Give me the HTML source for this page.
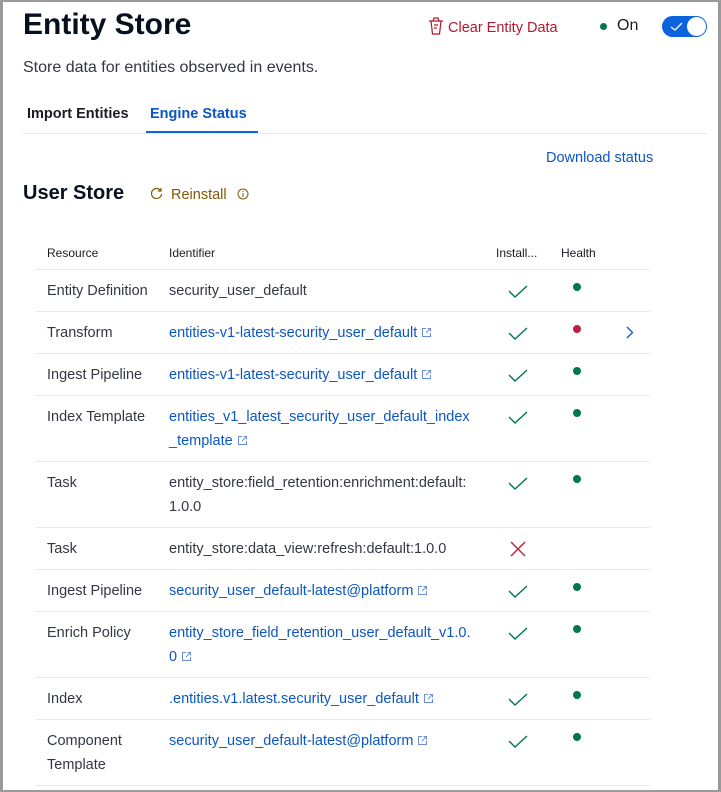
<!DOCTYPE html>
<html><head><meta charset="utf-8"><style>
*{box-sizing:border-box;margin:0;padding:0}
body{width:721px;height:792px;background:#fff;font-family:"Liberation Sans",sans-serif;color:#1a1c21;position:relative;overflow:hidden}
.frame{position:absolute;left:0;top:0;width:721px;height:792px;border:2px solid #9a9a9a;border-left-width:3px;border-right-width:3px}
.abs{position:absolute;white-space:nowrap}
h1{position:absolute;left:23px;top:8px;font-size:30px;font-weight:bold;color:#07101f}
.link{color:#0b56c5}
table{position:absolute;left:36px;top:236px;width:614px;border-collapse:collapse;font-size:14.5px;table-layout:fixed}
td,th{text-align:left;vertical-align:top;border-bottom:1px solid #e3e8f2;padding:9px 11px 8px;line-height:24px;color:#343741;white-space:nowrap;overflow:visible}
th{font-size:12px;font-weight:normal;color:#1a1c21;padding:7px 11px 6px;line-height:20px}
.ext{display:inline-block;width:11px;height:11px;margin-left:4px;vertical-align:-1px}
.dot{display:block;width:8px;height:8px;border-radius:50%;background:#00784f;margin:4px 0 0 12px}
.ck{display:block;margin:6px 0 0 12px}
</style></head><body>
<h1>Entity Store</h1>
<div class="abs" style="left:428px;top:17px;font-size:14.5px;color:#b4182d">
<svg width="16" height="18" viewBox="0 0 16 18" style="vertical-align:-3px;margin-right:4px" fill="none" stroke="#b4182d" stroke-width="1.2"><path d="M1 4h14M5 4l1-3h4l1 3M3 4l1.5 13h7L13 4M6 8h4M6 11h3"/></svg>Clear Entity Data</div>
<div class="abs" style="left:600px;top:23px;width:7px;height:7px;border-radius:50%;background:#00784f"></div>
<div class="abs" style="left:617px;top:17px;font-size:16px;color:#1a1c21">On</div>
<div class="abs" style="left:662px;top:16px;width:45px;height:21px;border-radius:11px;background:#0b64dd">
<svg width="14" height="10" viewBox="0 0 14 10" style="position:absolute;left:8px;top:6px" fill="none" stroke="#fff" stroke-width="1.3"><path d="M1 5l4 3 7-7"/></svg>
<div style="position:absolute;right:1px;top:1px;width:19px;height:19px;border-radius:50%;background:#fff"></div></div>
<div class="abs" style="left:23px;top:59px;font-size:16px;color:#343741">Store data for entities observed in events.</div>
<div class="abs" style="left:27px;top:106px;font-size:14.5px;font-weight:bold;color:#1a1c21">Import Entities</div>
<div class="abs" style="left:150px;top:106px;font-size:14.5px;font-weight:bold;color:#0b56c5">Engine Status</div>
<div class="abs" style="left:23px;top:133px;width:684px;height:1px;background:#e3e8f2"></div>
<div class="abs" style="left:146px;top:131px;width:112px;height:2px;background:#0b64dd"></div>
<div class="abs link" style="left:546px;top:150px;font-size:14.5px">Download status</div>
<div class="abs" style="left:23px;top:182px;font-size:20px;font-weight:bold;color:#07101f">User Store</div>
<div class="abs" style="left:150px;top:187px;font-size:14.5px;color:#825803">
<svg width="13" height="13" viewBox="0 0 13 13" style="vertical-align:-1px;margin-right:8px" fill="none" stroke="#825803" stroke-width="1.2"><path d="M10.5 3.5A5 5 0 1 0 11.5 7M11 1v3H8"/></svg>Reinstall
<svg width="12" height="12" viewBox="0 0 12 12" style="vertical-align:-1px;margin-left:6px" fill="none" stroke="#825803" stroke-width="1"><circle cx="6" cy="6" r="5"/><path d="M6 5v4M6 3v1"/></svg></div>
<table>
<colgroup><col style="width:122px"><col style="width:327px"><col style="width:65px"><col style="width:65px"><col style="width:35px"></colgroup>
<tr><th>Resource</th><th>Identifier</th><th>Install...</th><th>Health</th><th></th></tr>
<tr><td>Entity Definition</td><td>security_user_default</td><td>CK</td><td>DOT</td><td></td></tr>
<tr><td>Transform</td><td><span class="link">entities-v1-latest-security_user_default</span>EXT</td><td>CK</td><td><span class="dot" style="background:#bd1f3c"></span></td><td><svg width="8" height="13" viewBox="0 0 8 13" fill="none" stroke="#0b56c5" stroke-width="1.3" style="display:block;margin-top:5px"><path d="M1 1l5.5 5.5L1 12"/></svg></td></tr>
<tr><td>Ingest Pipeline</td><td><span class="link">entities-v1-latest-security_user_default</span>EXT</td><td>CK</td><td>DOT</td><td></td></tr>
<tr><td>Index Template</td><td><span class="link">entities_v1_latest_security_user_default_index<br>_template</span>EXT</td><td>CK</td><td>DOT</td><td></td></tr>
<tr><td>Task</td><td>entity_store:field_retention:enrichment:default:<br>1.0.0</td><td>CK</td><td>DOT</td><td></td></tr>
<tr><td>Task</td><td>entity_store:data_view:refresh:default:1.0.0</td><td><svg width="18" height="18" viewBox="0 0 18 18" fill="none" stroke="#bd1f3c" stroke-width="1.4" style="display:block;margin:3px 0 0 13px"><path d="M2 2l14 14M16 2L2 16"/></svg></td><td></td><td></td></tr>
<tr><td>Ingest Pipeline</td><td><span class="link">security_user_default-latest@platform</span>EXT</td><td>CK</td><td>DOT</td><td></td></tr>
<tr><td>Enrich Policy</td><td><span class="link">entity_store_field_retention_user_default_v1.0.<br>0</span>EXT</td><td>CK</td><td>DOT</td><td></td></tr>
<tr><td>Index</td><td><span class="link">.entities.v1.latest.security_user_default</span>EXT</td><td>CK</td><td>DOT</td><td></td></tr>
<tr><td>Component<br>Template</td><td><span class="link">security_user_default-latest@platform</span>EXT</td><td>CK</td><td>DOT</td><td></td></tr>
</table>
<div class="frame"></div>
<script>
document.querySelectorAll('td').forEach(function(td){
 var h=td.innerHTML;
 if(h==='CK')td.innerHTML='<svg class="ck" width="20" height="14" viewBox="0 0 20 14" fill="none" stroke="#00784f" stroke-width="1.4"><path d="M1 6l6 6L19 1"/></svg>';
 if(h==='DOT')td.innerHTML='<span class="dot"></span>';
 td.innerHTML=td.innerHTML.replace('EXT','<svg class="ext" viewBox="0 0 11 11" fill="none" stroke="#6a8fd6" stroke-width="1"><path d="M5 1.5H1.5v8h8V6M6.5 1.5h3v3M9.5 1.5L5 6"/></svg>');
});
</script>
</body></html>
